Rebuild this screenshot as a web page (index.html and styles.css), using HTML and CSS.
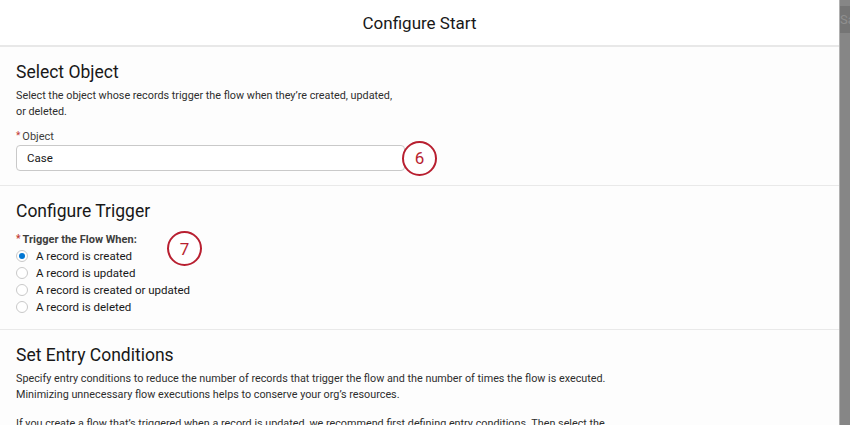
FILE: index.html
```html
<!DOCTYPE html>
<html>
<head>
  <title>Configure Start</title>
  <link rel="stylesheet" href="styles.css">
</head>
<body>
  <div class="page">
    <div class="modal">
      <div class="modal-header">
        <h2>Configure Start</h2>
      </div>

      <div class="section object-section">
        <h3>Select Object</h3>
        <p class="help">Select the object whose records trigger the flow when they’re created, updated,<br>or deleted.</p>
        <label class="field-label"><span class="req">*</span>Object</label>
        <div class="field-row">
          <div class="input">Case</div>
          <span class="callout callout-6">6</span>
        </div>
      </div>

      <div class="section trigger-section">
        <h3>Configure Trigger</h3>
        <div class="trigger-head">
          <span class="group-label"><span class="req">*</span>Trigger the Flow When:</span>
          <span class="callout callout-7">7</span>
        </div>
        <ul class="radios">
          <li><span class="radio checked"></span>A record is created</li>
          <li><span class="radio"></span>A record is updated</li>
          <li><span class="radio"></span>A record is created or updated</li>
          <li><span class="radio"></span>A record is deleted</li>
        </ul>
      </div>

      <div class="section last">
        <h3>Set Entry Conditions</h3>
        <p class="help entry">Specify entry conditions to reduce the number of records that trigger the flow and the number of times the flow is executed.<br>Minimizing unnecessary flow executions helps to conserve your org’s resources.</p>
        <p class="help entry">If you create a flow that’s triggered when a record is updated, we recommend first defining entry conditions. Then select the</p>
      </div>
    </div>

    <div class="scrollbar">
      <div class="save-ghost">Sav</div>
    </div>
  </div>
</body>
</html>
```

FILE: styles.css
```css
html, body {
  margin: 0;
  padding: 0;
  height: 100%;
  overflow: hidden;
}
body {
  font-family: "Roboto", "Liberation Sans", sans-serif;
  color: #181818;
  background-color: #fdfdfd;
}
.page {
  display: flex;
  height: 425px;
}
.modal {
  flex: 1;
  min-width: 0;
}
.modal-header {
  height: 45px;
  border-bottom: 2px solid #e8e8e8;
  display: flex;
  align-items: center;
  justify-content: center;
  background-color: #ffffff;
}
.modal-header h2 {
  margin: 0;
  font-size: 17px;
  font-weight: 400;
  color: #181818;
}
.section {
  padding: 15px 16px 15px 16px;
  border-bottom: 1px solid #e9e9e9;
}
.object-section {
  padding-bottom: 14px;
}
.trigger-section {
  padding-bottom: 14px;
}
.section.last {
  border-bottom: none;
}
.section h3 {
  margin: 0 0 6px 0;
  font-size: 17.5px;
  font-weight: 400;
  color: #181818;
}
.help {
  margin: 0 0 11px 0;
  font-size: 10.8px;
  line-height: 15.5px;
  color: #2e2e2e;
}
.help.entry {
  margin-bottom: 14px;
}
.field-label {
  display: block;
  font-size: 11px;
  color: #3e3e3c;
  margin-bottom: 2px;
}
.req {
  color: #c23934;
  margin-right: 2px;
  font-size: 10px;
  vertical-align: 1px;
}
.field-row {
  display: flex;
  align-items: center;
}
.input {
  width: 367px;
  height: 24px;
  border: 1px solid #c9c9c9;
  border-radius: 4px;
  background-color: #ffffff;
  padding: 0 10px;
  display: flex;
  align-items: center;
  font-size: 11.5px;
  color: #181818;
}
.callout {
  width: 35px;
  height: 35px;
  border: 2.7px solid #b81f30;
  border-radius: 50%;
  box-sizing: border-box;
  display: inline-flex;
  align-items: center;
  justify-content: center;
  color: #b81f30;
  font-size: 17px;
  background-color: #ffffff;
  flex: none;
}
.callout-6 {
  margin: -6px 0 -6px -3px;
}
.trigger-head {
  display: flex;
  align-items: flex-start;
  height: 14px;
  margin-top: 12px;
}
.group-label {
  font-size: 11px;
  font-weight: 700;
  color: #3e3e3c;
  width: 151px;
}
.callout-7 {
  margin-top: -2px;
}
.radios {
  list-style: none;
  margin: 0;
  padding: 0;
}
.radios li {
  display: flex;
  align-items: center;
  height: 17px;
  font-size: 11.5px;
  color: #181818;
}
.radio {
  width: 12px;
  height: 12px;
  border: 1px solid #c9c9c9;
  border-radius: 50%;
  background-color: #ffffff;
  margin-right: 8px;
  position: relative;
  box-sizing: border-box;
}
.radio.checked::after {
  content: "";
  position: absolute;
  left: 2px;
  top: 2px;
  width: 6px;
  height: 6px;
  border-radius: 50%;
  background-color: #0176d3;
}
.scrollbar {
  width: 10px;
  background-color: #868686;
  border-left: 1px solid #b0b0b0;
}
.save-ghost {
  margin-top: 6px;
  height: 27px;
  background-color: #757575;
  color: #8f8f8f;
  font-size: 13px;
  line-height: 27px;
  overflow: hidden;
  border-bottom: 6px solid #868686;
  box-shadow: 0 6px 0 -5px #9a9a9a;
}
```
